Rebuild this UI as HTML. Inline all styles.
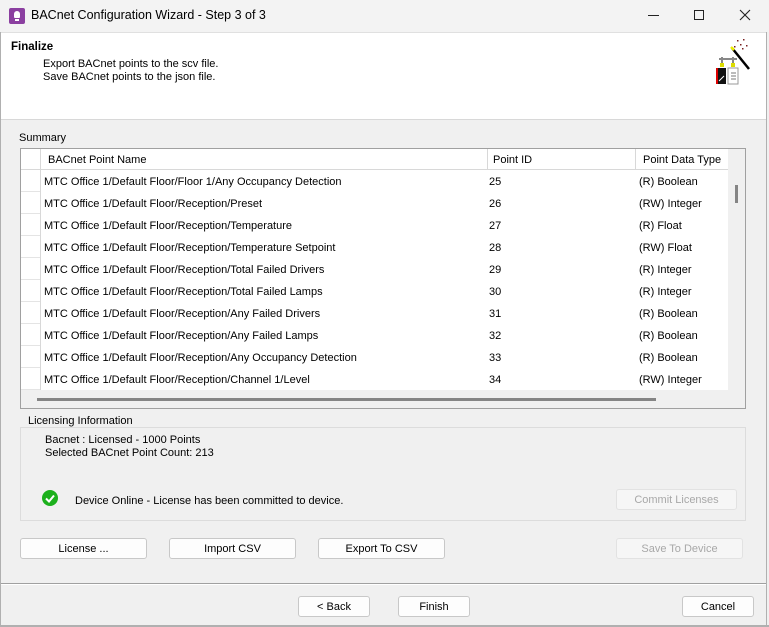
<!DOCTYPE html>
<html><head><meta charset="utf-8"><style>
*{box-sizing:border-box;margin:0;padding:0}
body{width:769px;height:627px;overflow:hidden;background:#f0f0f0;font-family:"Liberation Sans",sans-serif;font-size:11px;color:#000;position:relative}
.abs{position:absolute}
.title{left:0;top:0;width:769px;height:32px;background:#f3f3f3;}
.hdr{left:1px;top:32px;width:765px;height:88px;background:#fff;border-top:1px solid #e0e0e0;border-bottom:1px solid #d8d8d8}
.btn{position:absolute;height:21px;background:#fdfdfd;border:1px solid #c8c8c8;border-radius:3px;text-align:center;line-height:21px;font-size:11px}
.dis{color:#a8a8a8;background:#f6f6f6;border-color:#e2e2e2}
.row{position:absolute;left:0;height:22px;line-height:24px;width:707px;white-space:nowrap}
.row span{position:absolute}
</style></head><body>
<div class="abs title">
 <div class="abs" style="left:9px;top:8px;width:16px;height:16px;background:#8b3fa0;border-radius:2px"><div class="abs" style="left:5px;top:3px;width:6px;height:7px;background:#fff;border-radius:3px 3px 1px 1px"></div><div class="abs" style="left:6px;top:11px;width:4px;height:2px;background:#fff"></div></div>
 <div class="abs" style="left:31px;top:8px;font-size:12.5px">BACnet Configuration Wizard - Step 3 of 3</div>
 <div class="abs" style="left:648px;top:15px;width:11px;height:1px;background:#222"></div>
 <div class="abs" style="left:694px;top:10px;width:10px;height:10px;border:1px solid #222"></div>
 <svg class="abs" style="left:739px;top:9px" width="12" height="12"><path d="M1 1L11 11M11 1L1 11" stroke="#222" stroke-width="1.1"/></svg>
</div>
<div class="abs" style="left:0;top:32px;width:1px;height:595px;background:#b0b0b0"></div>
<div class="abs" style="left:766px;top:32px;width:1px;height:595px;background:#b0b0b0"></div>
<div class="abs hdr">
 <div class="abs" style="left:10px;top:8px;font-weight:bold;font-size:11.5px">Finalize</div>
 <div class="abs" style="left:42px;top:25px;line-height:13px">Export BACnet points to the scv file.<br>Save BACnet points to the json file.</div>
 <svg class="abs" style="left:712px;top:3px" width="40" height="50">
  <g fill="#7a2020"><rect x="24" y="4" width="1.5" height="1.5"/><rect x="30" y="3" width="1.5" height="1.5"/><rect x="27" y="8" width="1.5" height="1.5"/><rect x="33" y="9" width="1.5" height="1.5"/><rect x="21" y="10" width="1.5" height="1.5"/><rect x="29" y="12" width="1.5" height="1.5"/></g>
  <path d="M19 12L36 33" stroke="#000" stroke-width="2.5"/><path d="M18 11L21 14" stroke="#ee0" stroke-width="2.5"/>
  <path d="M6 23h18M9 21v8M20 21v8" stroke="#888" stroke-width="2"/>
  <rect x="7" y="27" width="4" height="4" fill="#dd0"/><rect x="18" y="27" width="4" height="4" fill="#dd0"/>
  <rect x="3" y="32" width="10" height="16" fill="#111"/><rect x="3" y="32" width="2" height="16" fill="#d00"/><path d="M6 45l5-5" stroke="#fff"/>
  <rect x="15" y="32" width="10" height="16" fill="#fff" stroke="#999"/><path d="M18 37h5M18 40h5M18 43h5" stroke="#777"/>
 </svg>
</div>
<div class="abs" style="left:19px;top:132px">Summary</div>
<div class="abs" style="left:20px;top:148px;width:726px;height:261px;border:1px solid #a0a0a0;background:#f0f0f0">
 <div class="abs" style="left:0;top:0;width:707px;height:241px;background:#fff;overflow:hidden">
  <div class="abs" style="left:0;top:0;width:707px;height:21px;border-bottom:1px solid #d8d8d8"></div>
  <div class="abs" style="left:19px;top:0;width:1px;height:241px;background:#d8d8d8"></div>
  <div class="abs" style="left:466px;top:0;width:1px;height:21px;background:#d8d8d8"></div>
  <div class="abs" style="left:614px;top:0;width:1px;height:21px;background:#d8d8d8"></div>
  <div class="row" style="top:0;height:21px;line-height:22px"><span style="left:27px">BACnet Point Name</span><span style="left:472px">Point ID</span><span style="left:622px">Point Data Type</span></div>
  <div id="rows"></div>
 </div>
 <div class="abs" style="left:714px;top:36px;width:3px;height:18px;background:#858585"></div>
 <div class="abs" style="left:16px;top:249px;width:619px;height:3px;background:#858585"></div>
</div>
<div class="abs" style="left:20px;top:427px;width:726px;height:94px;border:1px solid #dcdcdc"></div>
<div class="abs" style="left:27px;top:415px;background:#f0f0f0;padding:0 1px">Licensing Information</div>
<div class="abs" style="left:45px;top:434px;line-height:13px">Bacnet : Licensed - 1000 Points<br>Selected BACnet Point Count: 213</div>
<div class="abs" style="left:42px;top:490px;width:16px;height:16px;border-radius:50%;background:#1cb01c"></div>
<svg class="abs" style="left:42px;top:490px" width="16" height="16"><path d="M4 8.5l3 3 5-6" stroke="#fff" stroke-width="2" fill="none"/></svg>
<div class="abs" style="left:75px;top:495px">Device Online - License has been committed to device.</div>
<div class="btn dis" style="left:616px;top:489px;width:121px">Commit Licenses</div>
<div class="btn" style="left:20px;top:538px;width:127px">License ...</div>
<div class="btn" style="left:169px;top:538px;width:127px">Import CSV</div>
<div class="btn" style="left:318px;top:538px;width:127px">Export To CSV</div>
<div class="btn dis" style="left:616px;top:538px;width:127px">Save To Device</div>
<div class="abs" style="left:1px;top:583px;width:765px;height:2px;border-top:1px solid #a0a0a0;border-bottom:1px solid #fff"></div>
<div class="btn" style="left:298px;top:596px;width:72px">&lt; Back</div>
<div class="btn" style="left:398px;top:596px;width:72px">Finish</div>
<div class="btn" style="left:682px;top:596px;width:72px">Cancel</div>
<div class="abs" style="left:0;top:625px;width:769px;height:2px;background:#b0b0b0"></div>
<script>
var d=[["Floor 1/Any Occupancy Detection",25,"(R) Boolean"],["Reception/Preset",26,"(RW) Integer"],["Reception/Temperature",27,"(R) Float"],["Reception/Temperature Setpoint",28,"(RW) Float"],["Reception/Total Failed Drivers",29,"(R) Integer"],["Reception/Total Failed Lamps",30,"(R) Integer"],["Reception/Any Failed Drivers",31,"(R) Boolean"],["Reception/Any Failed Lamps",32,"(R) Boolean"],["Reception/Any Occupancy Detection",33,"(R) Boolean"],["Reception/Channel 1/Level",34,"(RW) Integer"]];
var h="";d.forEach(function(r,i){var t=21+i*22;h+='<div class="row" style="top:'+t+'px"><span style="left:23px">MTC Office 1/Default Floor/'+r[0]+'</span><span style="left:468px">'+r[1]+'</span><span style="left:618px">'+r[2]+'</span></div><div class="abs" style="left:0;top:'+(t+21)+'px;width:19px;height:1px;background:#e4e4e4"></div>';});
document.getElementById("rows").innerHTML=h;
</script>
</body></html>
